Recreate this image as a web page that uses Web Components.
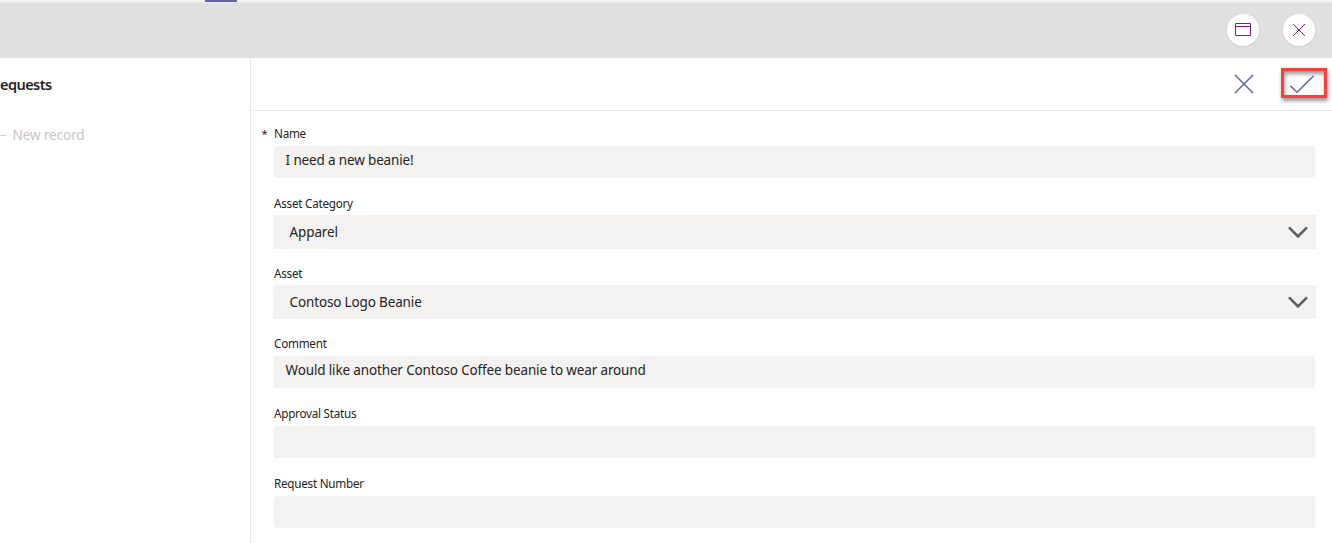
<!DOCTYPE html>
<html lang="en">
<head>
<meta charset="utf-8">
<title>Requests</title>
<style>
html,body{margin:0;height:543px;overflow:hidden;background:#fff;font-family:"Noto Sans","Open Sans",sans-serif;color:#252423}
</style>
</head>
<body>
<request-app></request-app>
<script>
const define = (name, html) => customElements.define(name, class extends HTMLElement {
  constructor() {
    super();
    const t = document.createElement('template');
    t.innerHTML = html;
    this.attachShadow({mode: 'open'}).append(t.content.cloneNode(true));
  }
});

define('tab-strip', `<style>
:host{display:block;height:2px;background:#f3f2f1;border-bottom:1px solid #e8e7e6;padding-left:205px}
div{width:32px;height:2px;background:#6264a7}
</style><div></div>`);

define('round-button', `<style>
:host{display:grid;place-items:center;width:32px;height:32px;border-radius:50%;background:#fff;box-shadow:0 1px 3px rgba(0,0,0,.08)}
</style><slot></slot>`);

define('window-bar', `<style>
:host{display:flex;justify-content:flex-end;gap:24px;height:55px;box-sizing:border-box;padding:11px 17px 0 0;background:#e0e0e0}
svg{display:block}
.win{margin-top:-1px}
</style>
<round-button><svg class="win" width="16" height="13" fill="none" stroke="#881798"><path d="M.5 .5h15v12H.5zM.5 3.5h15"/></svg></round-button>
<round-button><svg width="14" height="14" fill="none" stroke="#881798"><path d="M1 1l12 12M13 1L1 13"/></svg></round-button>`);

define('record-list', `<style>
:host{display:block;width:250px;flex:none;border-right:1px solid #e6e6e6;overflow:hidden}
h2{margin:14px 0 0;font-size:14.5px;line-height:24px;font-weight:600;letter-spacing:-.55px;color:#252423}
div{display:flex;align-items:center;gap:6.5px;margin-top:29px;height:20px;font-size:13.5px;letter-spacing:-.1px;color:#c8c6c4}
i{width:6px;height:1px;background:#d2d0ce}
</style><h2>equests</h2><div><i></i><span>New record</span></div>`);

define('form-toolbar', `<style>
:host{display:flex;justify-content:flex-end;height:52px;border-bottom:1px solid #e6e6e6}
svg{display:block}
.cancel{margin:16px 26px 0 0}
.save{box-sizing:border-box;width:46px;height:30px;margin:10px 5px 0 0;border:3px solid #fa3e3e;box-shadow:1px 3px 4px rgba(0,0,0,.4),inset 1px 3px 4px rgba(0,0,0,.4)}
</style>
<svg class="cancel" width="22" height="20" fill="none" stroke="#6264a7" stroke-width="1.5"><path d="M2 1l18 18M20 1L2 19"/></svg>
<div class="save"><svg width="40" height="24" fill="none" stroke="#6264a7" stroke-width="1.5"><path d="M6.5 15l6.5 6.3L29.5 5"/></svg></div>`);

define('form-field', `<style>
:host{display:block;position:relative;height:70px;box-sizing:border-box}
label{display:block;height:21px;font-size:11.7px;line-height:17px;letter-spacing:-.25px}
.star{position:absolute;left:-12.5px;top:0;font-size:11px;line-height:17px;display:none}
:host([required]) .star{display:block}
.box{display:flex;box-sizing:border-box;height:32px;padding:0 12px 0 11.6px;border-radius:3px;background:#f3f2f1;font-size:13.5px;letter-spacing:-.15px;line-height:28px;white-space:pre}
svg{display:none;margin-left:auto}
:host([square]) .box{border-radius:0}
:host([select]) .box{height:34px;margin:-1px -1px 0;padding:0 8px 0 16.6px;border-radius:0;line-height:34px}
:host([select]) svg{display:block}
</style>
<label><span class="star">*</span><slot name="label"></slot></label>
<div class="box"><slot></slot><svg width="20" height="34" fill="none" stroke="#605e5c" stroke-width="2.5"><path d="M1 12.4l9 9 9-9"/></svg></div>`);

define('request-form', `<style>
:host{display:block;flex:1}
section{padding:14px 17px 0 23px}
</style>
<form-toolbar></form-toolbar>
<section>
<form-field required><span slot="label">Name</span><span>I need a new beanie!</span></form-field>
<form-field select><span slot="label">Asset Category</span><span>Apparel</span></form-field>
<form-field select><span slot="label">Asset</span><span>Contoso Logo Beanie</span></form-field>
<form-field><span slot="label">Comment</span><span>Would like another Contoso Coffee beanie to wear around</span></form-field>
<form-field square><span slot="label">Approval Status</span></form-field>
<form-field><span slot="label">Request Number</span></form-field>
</section>`);

define('request-app', `<style>
:host{display:flex;flex-direction:column;height:543px;overflow:hidden}
main{display:flex;flex:1;min-height:0}
</style><tab-strip></tab-strip><window-bar></window-bar><main><record-list></record-list><request-form></request-form></main>`);
</script>
</body>
</html>
